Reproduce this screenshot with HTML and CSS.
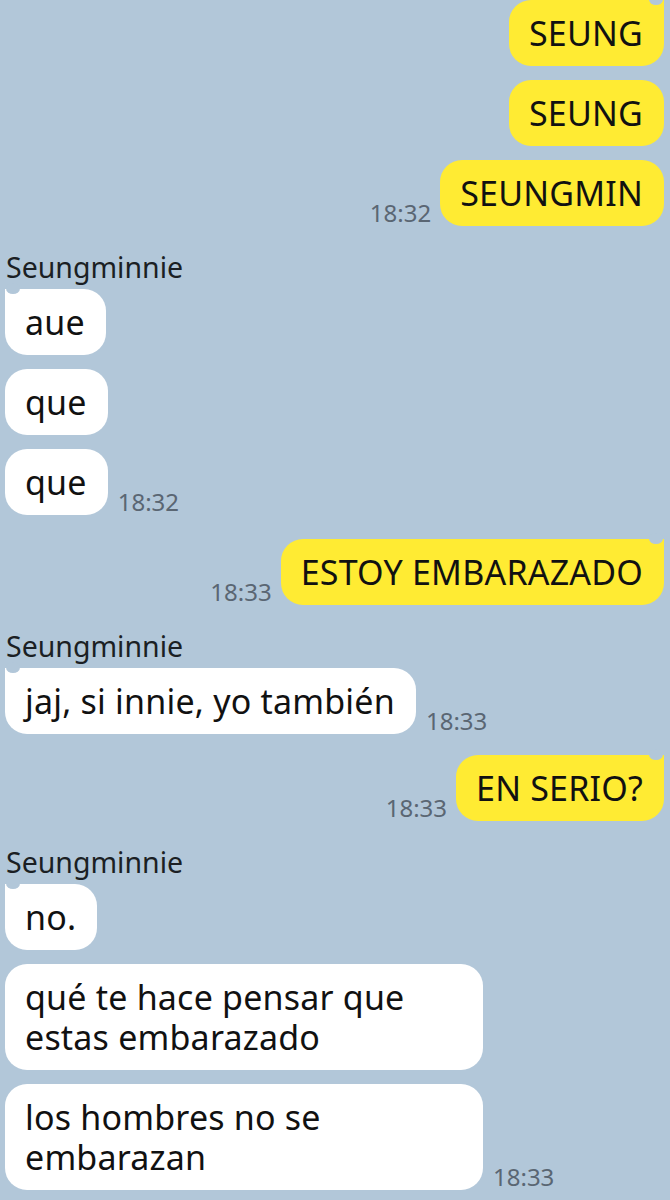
FILE: index.html
```html
<!DOCTYPE html>
<html lang="es">
<head>
<meta charset="utf-8">
<title>Chat</title>
<link rel="stylesheet" href="styles.css">
</head>
<body>
<div class="chat">
  <div class="group me first">
    <div class="row"><div class="bubble tail">SEUNG</div></div>
    <div class="row"><div class="bubble">SEUNG</div></div>
    <div class="row"><span class="time">18:32</span><div class="bubble">SEUNGMIN</div></div>
  </div>

  <div class="group them">
    <div class="name">Seungminnie</div>
    <div class="row"><div class="bubble tail">aue</div></div>
    <div class="row"><div class="bubble">que</div></div>
    <div class="row"><div class="bubble">que</div><span class="time">18:32</span></div>
  </div>

  <div class="group me">
    <div class="row"><span class="time">18:33</span><div class="bubble tail">ESTOY EMBARAZADO</div></div>
  </div>

  <div class="group them">
    <div class="name">Seungminnie</div>
    <div class="row"><div class="bubble tail">jaj, si innie, yo también</div><span class="time">18:33</span></div>
  </div>

  <div class="group me short">
    <div class="row"><span class="time">18:33</span><div class="bubble tail">EN SERIO?</div></div>
  </div>

  <div class="group them">
    <div class="name">Seungminnie</div>
    <div class="row"><div class="bubble tail">no.</div></div>
    <div class="row"><div class="bubble">qué te hace pensar que estas embarazado</div></div>
    <div class="row"><div class="bubble">los hombres no se embarazan</div><span class="time">18:33</span></div>
  </div>
</div>
</body>
</html>
```

FILE: styles.css
```css
html, body {
  margin: 0;
  padding: 0;
  background: #b2c7d9;
}

.chat {
  width: 670px;
  display: flex;
  flex-direction: column;
  font-family: "Noto Sans", Roboto, sans-serif;
  color: #111111;
}

.group {
  display: flex;
  flex-direction: column;
  gap: 14px;
  margin-top: 24px;
}

.group.first {
  margin-top: 0;
}

.group.short {
  margin-top: 21px;
}

.me {
  align-items: flex-end;
  padding-right: 6px;
}

.them {
  align-items: flex-start;
  padding-left: 5px;
}

.row {
  display: flex;
  align-items: flex-end;
}

.name {
  font-size: 28.5px;
  line-height: 34px;
  color: #1b1f24;
  margin-left: 1px;
  margin-bottom: -9px;
}

.bubble {
  position: relative;
  box-sizing: border-box;
  max-width: 478px;
  padding: 13px 21px 13px 20px;
  font-size: 34px;
  line-height: 40px;
  border-radius: 22px;
  letter-spacing: 0.2px;
}

.me .bubble {
  background: #ffeb33;
}

.them .bubble {
  background: #ffffff;
}

.me .bubble.tail {
  border-top-right-radius: 0;
}

.them .bubble.tail {
  border-top-left-radius: 0;
}

.bubble.tail::before {
  content: "";
  position: absolute;
  top: -6px;
  width: 14px;
  height: 11px;
  border-radius: 50%;
  background: #b2c7d9;
}

.me .bubble.tail::before {
  right: 1px;
}

.them .bubble.tail::before {
  left: 1px;
}

.time {
  font-size: 24px;
  line-height: 24px;
  color: #5a6673;
  margin-bottom: 1px;
}

.me .time {
  margin-right: 9px;
}

.them .time {
  margin-left: 10px;
}
```
